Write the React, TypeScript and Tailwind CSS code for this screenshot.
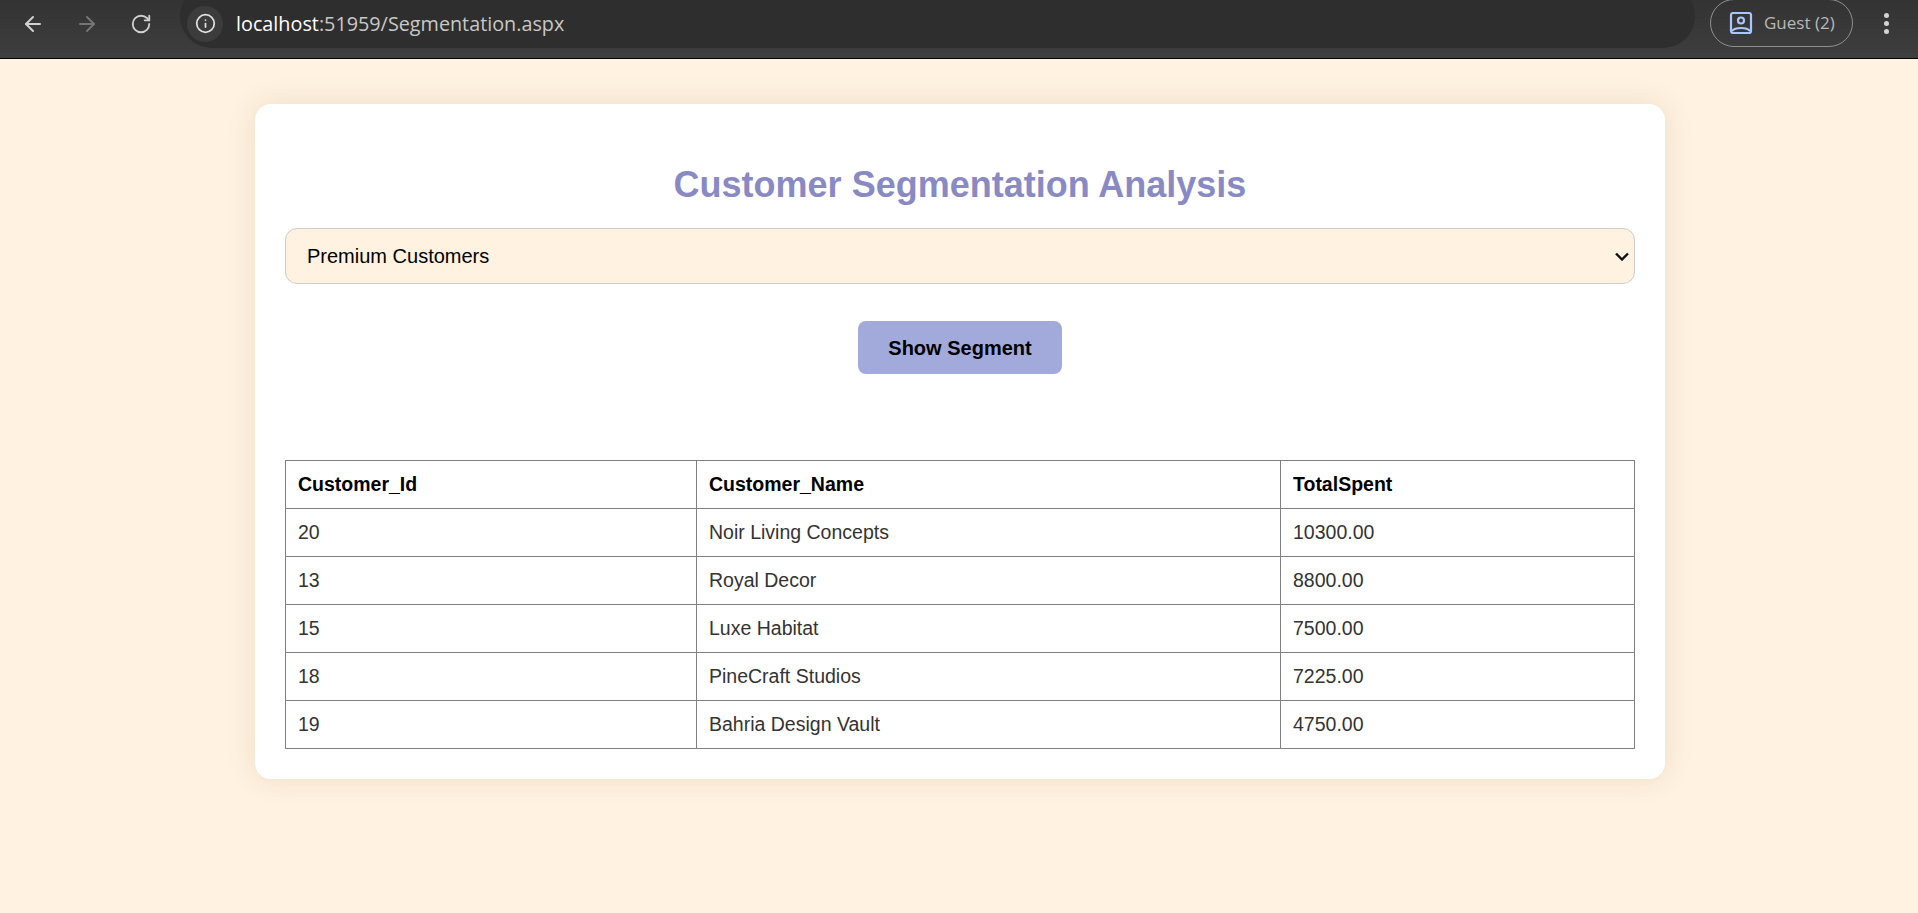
import { ArrowLeft, ArrowRight, Info, RotateCw } from "lucide-react";

const rows = [
  ["20", "Noir Living Concepts", "10300.00"],
  ["13", "Royal Decor", "8800.00"],
  ["15", "Luxe Habitat", "7500.00"],
  ["18", "PineCraft Studios", "7225.00"],
  ["19", "Bahria Design Vault", "4750.00"],
];

const BrowserBar = () => (
  <div className="h-[59px] flex items-start overflow-hidden border-b border-black bg-gradient-to-b from-[#333333] to-[#3e3e3e]">
    <div className="flex items-center h-[48px] pl-[21px] gap-[30px] w-[180px] text-[#d0d0d0]">
      <ArrowLeft className="w-[24px] h-[24px]" strokeWidth={2} />
      <ArrowRight className="w-[24px] h-[24px] text-[#757575]" strokeWidth={2} />
      <RotateCw className="w-[22px] h-[22px] ml-[1px]" strokeWidth={2} />
    </div>
    <div className="flex-1 h-[64px] -mt-[16px] pt-[15px] rounded-full bg-[#2e2e2e] flex items-center">
      <span className="ml-[7px] w-[36px] h-[36px] rounded-full bg-[#3c3c3c] flex items-center justify-center text-[#e0e0e0]">
        <Info className="w-[21px] h-[21px]" strokeWidth={2} />
      </span>
      <span className="ml-[13px] text-[19.8px] text-[#c8c8c8] font-['Open_Sans',sans-serif]">
        <span className="text-white">localhost</span>:51959/Segmentation.aspx
      </span>
    </div>
    <div className="flex items-start w-[223px] pl-[15px]">
      <div className="h-[48px] w-[143px] -mt-[1px] rounded-full border border-[#8f8f8f] flex items-center pl-[18px] gap-[11px]">
        <svg className="w-[24px] h-[24px] text-[#a8c7fa]" viewBox="0 0 24 24" fill="none" stroke="currentColor" strokeWidth="2.2">
          <rect x="2" y="2" width="20" height="20" rx="2" />
          <circle cx="12" cy="9.5" r="3" />
          <path d="M3 20c3-4 15-4 18 0" />
        </svg>
        <span className="text-[17px] text-[#b8b8b8] font-['Open_Sans',sans-serif]">Guest (2)</span>
      </div>
      <div className="ml-[31px] mt-[13px] flex flex-col gap-[3px]">
        <span className="w-[5px] h-[5px] rounded-full bg-[#d4d4d4]" />
        <span className="w-[5px] h-[5px] rounded-full bg-[#d4d4d4]" />
        <span className="w-[5px] h-[5px] rounded-full bg-[#d4d4d4]" />
      </div>
    </div>
  </div>
);

export default function App() {
  return (
    <div className="h-[913px] overflow-hidden bg-[#fff2e0] font-['Liberation_Sans',Arial,sans-serif]">
      <BrowserBar />
      <div className="w-[1410px] ml-[255px] mt-[45px] bg-white rounded-[16px] p-[30px] shadow-[0_0_30px_rgba(90,50,10,0.1)]">
        <h2 className="mt-[30px] text-center text-[36px] leading-[41px] font-bold text-[#898ac4]">
          Customer Segmentation Analysis
        </h2>
        <div className="relative mt-[23px]">
          <select className="block w-full h-[56px] px-[21px] rounded-[12px] border border-[#cccccc] bg-[#fff2e0] text-[20px] text-black appearance-none">
            <option>Premium Customers</option>
            <option>Regular Customers</option>
          </select>
          <svg className="absolute right-[6px] top-[24px] w-[14px] h-[9px] pointer-events-none" viewBox="0 0 14 9" fill="none" stroke="#111111" strokeWidth="2.4">
            <path d="M1 1.5l6 6 6-6" />
          </svg>
        </div>
        <div className="mt-[37px] flex justify-center">
          <button className="w-[204px] h-[53px] rounded-[8px] bg-[#a2aadb] text-[20px] font-bold text-black">
            Show Segment
          </button>
        </div>
        <table className="mt-[86px] w-full border-collapse border border-[#808080] text-[19.5px] text-[#333333] table-fixed">
          <colgroup>
            <col className="w-[411px]" />
            <col className="w-[584px]" />
            <col />
          </colgroup>
          <thead>
            <tr className="h-[48px]">
              <th className="border border-[#808080] px-[12px] text-left font-bold text-black">Customer_Id</th>
              <th className="border border-[#808080] px-[12px] text-left font-bold text-black">Customer_Name</th>
              <th className="border border-[#808080] px-[12px] text-left font-bold text-black">TotalSpent</th>
            </tr>
          </thead>
          <tbody>
            {rows.map((r) => (
              <tr key={r[0]} className="h-[48px]">
                <td className="border border-[#808080] px-[12px]">{r[0]}</td>
                <td className="border border-[#808080] px-[12px]">{r[1]}</td>
                <td className="border border-[#808080] px-[12px]">{r[2]}</td>
              </tr>
            ))}
          </tbody>
        </table>
      </div>
    </div>
  );
}
